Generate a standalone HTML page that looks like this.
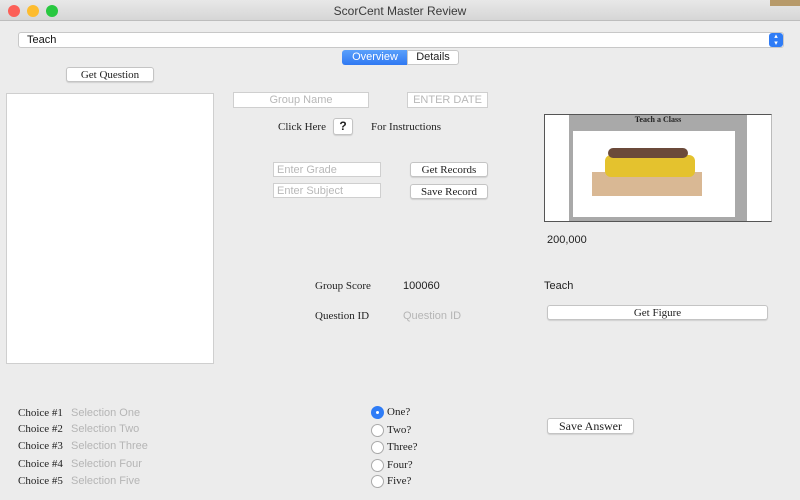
<!DOCTYPE html>
<html><head><style>
*{margin:0;padding:0;box-sizing:border-box}
body{width:800px;height:500px;background:#ececec;position:relative;overflow:hidden;font-family:"Liberation Sans",sans-serif;font-size:11px;color:#222}
.a{position:absolute}
.serif{font-family:"Liberation Serif",serif;font-size:11px;color:#222}
.btn{position:absolute;background:#fff;border:1px solid #c4c4c4;border-radius:3px;box-shadow:0 1px 1px rgba(0,0,0,.12);text-align:center;font-family:"Liberation Serif",serif;font-size:11px;line-height:14px;color:#222}
.fld{position:absolute;background:#fff;border:1px solid #cfcfcf;color:#b8b8b8;font-size:11px;line-height:14px}
.ph{color:#b5b5b5}
.radio{position:absolute;width:13px;height:13px;border-radius:50%;border:1px solid #aaa;background:#fff}
</style></head><body>
<div class="a" style="left:0;top:0;width:800px;height:21px;background:linear-gradient(#e8e8e8,#d6d6d6);border-bottom:1px solid #bdbdbd"></div>
<div class="a" style="left:770px;top:0;width:30px;height:6px;background:#b79a6a"></div>
<div class="a" style="left:8px;top:5px;width:12px;height:12px;border-radius:50%;background:#fc5f57"></div>
<div class="a" style="left:27px;top:5px;width:12px;height:12px;border-radius:50%;background:#fdbc2e"></div>
<div class="a" style="left:46px;top:5px;width:12px;height:12px;border-radius:50%;background:#28c840"></div>
<div class="a" style="left:0;top:4px;width:800px;text-align:center;font-size:12px;color:#3a3a3a">ScorCent Master Review</div>

<div class="a" style="left:18px;top:32px;width:766px;height:16px;background:#fff;border:1px solid #c8c8c8;border-radius:3px;padding-left:8px;line-height:14px;font-size:11px;color:#111">Teach</div>
<div class="a" style="left:769px;top:33px;width:14px;height:14px;background:#2f7cf6;border-radius:3px;color:#fff;font-size:7px;line-height:7px;text-align:center">▴<br>▾</div>

<div class="a" style="left:342px;top:50px;width:66px;height:15px;background:linear-gradient(#5aa0fb,#2f78f2);border-radius:3px 0 0 3px;color:#fff;text-align:center;line-height:15px;font-size:11px">Overview</div>
<div class="a" style="left:407px;top:50px;width:52px;height:15px;background:#fff;border:1px solid #c8c8c8;border-radius:0 3px 3px 0;text-align:center;line-height:13px;font-size:11px">Details</div>

<div class="btn" style="left:66px;top:67px;width:88px;height:15px">Get Question</div>
<div class="a" style="left:6px;top:93px;width:208px;height:271px;background:#fff;border:1px solid #cfcfcf"></div>

<div class="fld" style="left:233px;top:92px;width:136px;height:16px;text-align:center">Group Name</div>
<div class="fld" style="left:407px;top:92px;width:81px;height:16px;text-align:center">ENTER DATE</div>
<div class="a serif" style="left:278px;top:121px">Click Here</div>
<div class="btn" style="left:333px;top:118px;width:20px;height:17px;font-family:'Liberation Sans',sans-serif;font-weight:bold;font-size:12px;line-height:15px">?</div>
<div class="a serif" style="left:371px;top:121px">For Instructions</div>

<div class="fld" style="left:273px;top:162px;width:108px;height:15px;padding-left:3px;line-height:14px">Enter Grade</div>
<div class="btn" style="left:410px;top:162px;width:78px;height:15px">Get Records</div>
<div class="fld" style="left:273px;top:183px;width:108px;height:15px;padding-left:3px;line-height:14px">Enter Subject</div>
<div class="btn" style="left:410px;top:184px;width:78px;height:15px">Save Record</div>

<div class="a" style="left:544px;top:114px;width:228px;height:108px;background:#fff;border:1px solid #555;border-right-color:#bbb"></div>
<div class="a" style="left:569px;top:115px;width:178px;height:106px;background:#a9a9a9"></div>
<div class="a" style="left:573px;top:131px;width:162px;height:86px;background:#fff"></div>
<div class="a" style="left:569px;top:115px;width:178px;text-align:center;font-family:'Liberation Serif',serif;font-weight:bold;font-size:8px">Teach a Class</div>
<div class="a" style="left:592px;top:172px;width:110px;height:24px;background:#d9b894"></div>
<div class="a" style="left:605px;top:155px;width:90px;height:22px;background:#e4c22e;border-radius:6px"></div>
<div class="a" style="left:608px;top:148px;width:80px;height:10px;background:#6b4a3a;border-radius:5px"></div>

<div class="a" style="left:547px;top:234px;font-size:11px">200,000</div>
<div class="a serif" style="left:315px;top:280px">Group Score</div>
<div class="a" style="left:403px;top:280px">100060</div>
<div class="a" style="left:544px;top:280px">Teach</div>
<div class="a serif" style="left:315px;top:310px">Question ID</div>
<div class="a ph" style="left:403px;top:310px">Question ID</div>
<div class="btn" style="left:547px;top:305px;width:221px;height:15px">Get Figure</div>

<div class="a serif" style="left:18px;top:407px">Choice #1</div><div class="a ph" style="left:71px;top:407px">Selection One</div>
<div class="a serif" style="left:18px;top:423px">Choice #2</div><div class="a ph" style="left:71px;top:423px">Selection Two</div>
<div class="a serif" style="left:18px;top:440px">Choice #3</div><div class="a ph" style="left:71px;top:440px">Selection Three</div>
<div class="a serif" style="left:18px;top:458px">Choice #4</div><div class="a ph" style="left:71px;top:458px">Selection Four</div>
<div class="a serif" style="left:18px;top:475px">Choice #5</div><div class="a ph" style="left:71px;top:475px">Selection Five</div>

<div class="radio" style="left:371px;top:406px;background:#2f7cf6;border-color:#2f7cf6"><div style="position:absolute;left:4px;top:4px;width:3px;height:3px;border-radius:50%;background:#fff"></div></div>
<div class="a serif" style="left:387px;top:406px">One?</div>
<div class="radio" style="left:371px;top:424px"></div><div class="a serif" style="left:387px;top:424px">Two?</div>
<div class="radio" style="left:371px;top:441px"></div><div class="a serif" style="left:387px;top:441px">Three?</div>
<div class="radio" style="left:371px;top:459px"></div><div class="a serif" style="left:387px;top:459px">Four?</div>
<div class="radio" style="left:371px;top:475px"></div><div class="a serif" style="left:387px;top:475px">Five?</div>

<div class="btn" style="left:547px;top:418px;width:87px;height:16px;font-size:12px">Save Answer</div>
</body></html>
